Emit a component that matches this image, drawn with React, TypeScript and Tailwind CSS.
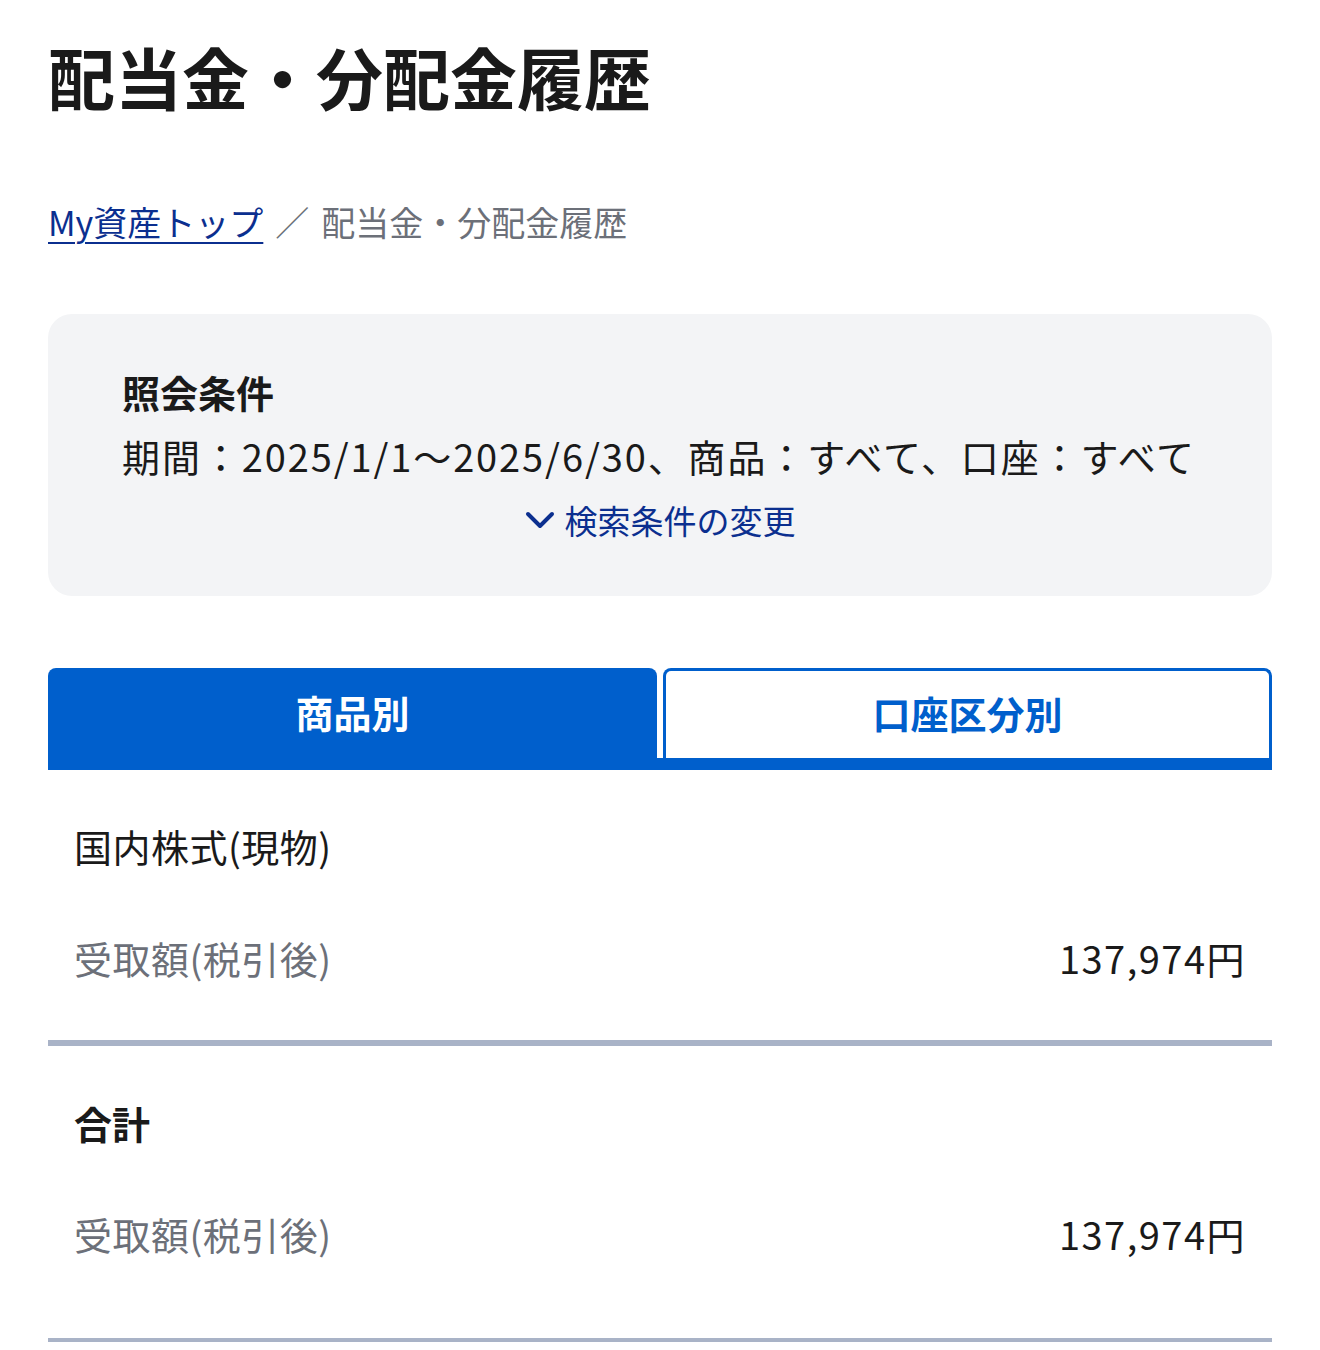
import React, { useState } from "react";

const font = "font-['Noto_Sans_CJK_JP','Noto_Sans',sans-serif]";

const AmountRow = ({ label, amount }: { label: string; amount: string }) => (
  <div className="flex items-center justify-between leading-[48px] text-[38px]">
    <span className="text-[#6c7079] tracking-[0.5px]">{label}</span>
    <span className="text-[#1a1a1a] tracking-[1.5px]">{amount}</span>
  </div>
);

export default function App() {
  const [tab, setTab] = useState<"product" | "account">("product");

  return (
    <div className={`min-h-screen bg-white px-12 pt-[36px] ${font}`}>
      {/* Title */}
      <h1 className="text-[67px] font-bold leading-[80px] text-[#1a1a1a]">
        配当金・分配金履歴
      </h1>

      {/* Breadcrumb */}
      <nav className="mt-[82px] flex items-center text-[34px] leading-[48px]">
        <a href="#" className="text-[#0b2f8f] underline decoration-2 underline-offset-[6px]">
          My資産トップ
        </a>
        <span className="mx-[12px] text-[#6c7079]">／</span>
        <span className="text-[#6c7079]">配当金・分配金履歴</span>
      </nav>

      {/* Search conditions */}
      <div className="mt-[68px] rounded-[24px] bg-[#f3f4f6] px-[74px] pb-[52px] pt-[54px]">
        <h2 className="text-[38px] font-bold leading-[48px] text-[#1a1a1a]">照会条件</h2>
        <p className="mt-[16px] text-[38px] leading-[48px] tracking-[1.9px] text-[#1a1a1a]">
          期間：2025/1/1〜2025/6/30、商品：すべて、口座：すべて
        </p>
        <div className="mt-[16px] flex justify-center">
          <button className="flex items-center gap-[10px] text-[33px] leading-[48px] text-[#0b2f8f]">
            <svg width="30" height="18" viewBox="0 0 30 18" fill="none">
              <polyline
                points="3,3 15,15 27,3"
                stroke="#0b2f8f"
                strokeWidth="4"
                strokeLinecap="round"
                strokeLinejoin="round"
              />
            </svg>
            検索条件の変更
          </button>
        </div>
      </div>

      {/* Tabs */}
      <div className="mt-[72px] border-b-[12px] border-[#005fcc]">
        <div className="grid grid-cols-2 gap-[6px]">
          <button
            onClick={() => setTab("product")}
            className={`h-[90px] rounded-t-[8px] pb-[4px] text-[38px] font-bold ${
              tab === "product"
                ? "bg-[#005fcc] text-white"
                : "border-x-[3px] border-t-[3px] border-[#005fcc] bg-white text-[#005fcc]"
            }`}
          >
            商品別
          </button>
          <button
            onClick={() => setTab("account")}
            className={`h-[90px] rounded-t-[8px] pb-[4px] text-[38px] font-bold ${
              tab === "account"
                ? "bg-[#005fcc] text-white"
                : "border-x-[3px] border-t-[3px] border-[#005fcc] bg-white text-[#005fcc]"
            }`}
          >
            口座区分別
          </button>
        </div>
      </div>

      {/* Domestic stocks */}
      <div className="px-[26px] pt-[52px] pb-[58px]">
        <div className="text-[38px] leading-[48px] tracking-[0.5px] text-[#1a1a1a]">国内株式(現物)</div>
        <div className="mt-[64px]">
          <AmountRow label="受取額(税引後)" amount="137,974円" />
        </div>
      </div>
      <div className="h-[6px] bg-[#a9b3c7]" />

      {/* Total */}
      <div className="px-[26px] pt-[53px] pb-[80px]">
        <div className="text-[38px] font-bold leading-[48px] text-[#1a1a1a]">合計</div>
        <div className="mt-[63px]">
          <AmountRow label="受取額(税引後)" amount="137,974円" />
        </div>
      </div>
      <div className="h-[4px] bg-[#a9b3c7]" />
    </div>
  );
}
